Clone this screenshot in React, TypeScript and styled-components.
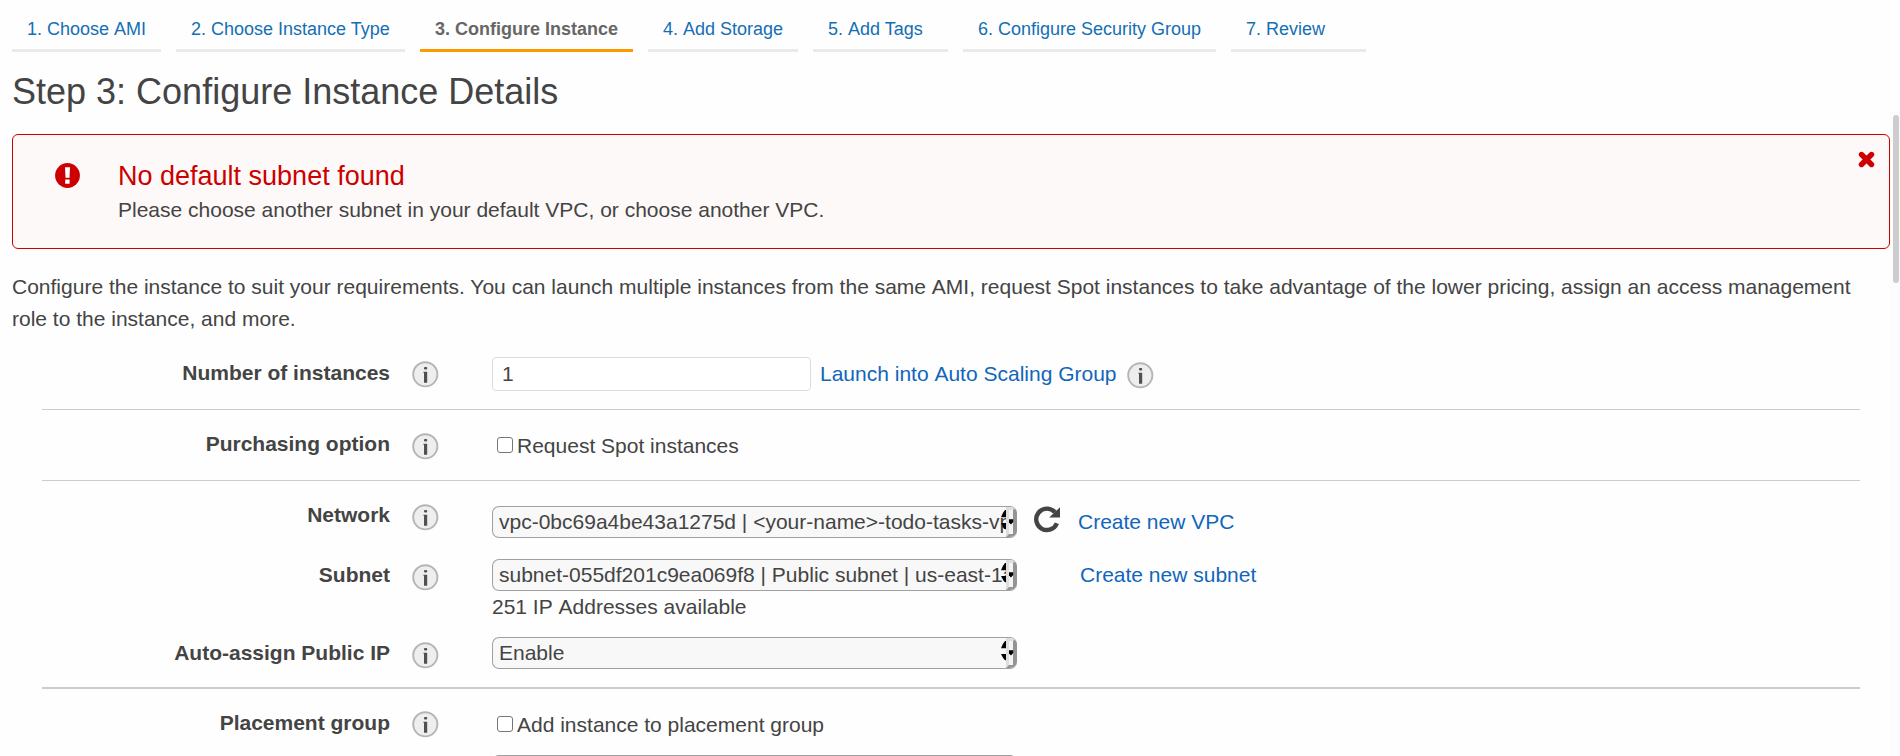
import React from "react";
import styled, { createGlobalStyle } from "styled-components";

const Global = createGlobalStyle`
  * { box-sizing: border-box; }
  html, body { margin: 0; height: 100%; overflow: hidden; background: #fefefe; }
  body {
    font-family: "Liberation Sans", Arial, sans-serif;
    font-size: 21px;
    color: #444;
  }
`;

const Page = styled.div`
  display: flex;
  flex-direction: column;
  height: 756px;
  overflow: hidden;
`;

const Tabs = styled.nav`
  display: flex;
  flex: none;
  gap: 15px;
  height: 52px;
  padding-left: 12px;
`;

const Tab = styled.a<{ $width: number; $active?: boolean }>`
  flex: none;
  width: ${(p) => p.$width}px;
  height: 52px;
  padding-left: 15px;
  font-size: 18px;
  line-height: 58px;
  white-space: nowrap;
  font-weight: ${(p) => (p.$active ? 700 : 400)};
  color: ${(p) => (p.$active ? "#666" : "#146eb4")};
  border-bottom: 3px solid ${(p) => (p.$active ? "#f90" : "#eaeaea")};
`;

const Title = styled.h1`
  flex: none;
  margin: 0;
  height: 60px;
  padding: 19px 0 0 12px;
  font-size: 36px;
  line-height: 41px;
  font-weight: 400;
`;

const Body = styled.div`
  display: flex;
  flex: 1;
  min-height: 0;
`;

const Content = styled.main`
  flex: 1;
  min-width: 0;
  overflow: hidden;
  padding: 22px 0 0 12px;
`;

const Track = styled.div`
  flex: none;
  width: 10px;
  padding: 3px 1px 0 3px;
  background: #fcfcfc;
`;

const Thumb = styled.div`
  height: 168px;
  border-radius: 3px;
  background: #cdcdcd;
`;

const Alert = styled.section`
  display: flex;
  height: 115px;
  border: 1px solid #c00;
  border-radius: 6px;
  background: #fdf9f8;
`;

const AlertIcon = styled.div`
  width: 105px;
  padding: 28px 0 0 42px;
`;

const AlertText = styled.div`
  flex: 1;
  padding-top: 25px;
`;

const AlertTitle = styled.div`
  height: 34px;
  font-size: 27px;
  line-height: 33px;
  color: #c00;
`;

const AlertMessage = styled.div`
  line-height: 32px;
`;

const Close = styled.div`
  padding: 16px 14px 0 0;
`;

const Intro = styled.p`
  margin: 22px 0 0;
  width: 1860px;
  line-height: 32px;
`;

const Group = styled.section<{ $height: number; $line?: number }>`
  width: 1818px;
  height: ${(p) => p.$height}px;
  margin-left: 30px;
  border-bottom: ${(p) => p.$line ?? 0}px solid #ccc;
`;

const Row = styled.div<{ $height?: number }>`
  display: flex;
  height: ${(p) => p.$height ?? 60}px;
`;

const Label = styled.div<{ $top: number }>`
  width: 348px;
  padding-top: ${(p) => p.$top}px;
  text-align: right;
  font-weight: 700;
  line-height: 24px;
`;

const InfoCell = styled.div<{ $top: number }>`
  width: 102px;
  padding: ${(p) => p.$top}px 0 0 22px;
`;

const Field = styled.div<{ $top: number }>`
  display: flex;
  flex-wrap: wrap;
  align-content: flex-start;
  align-items: flex-start;
  width: 900px;
  padding-top: ${(p) => p.$top}px;
`;

const NumberBox = styled.div`
  width: 319px;
  height: 34px;
  padding-left: 9px;
  border: 1px solid #ddd;
  border-radius: 4px;
  background: #fff;
  line-height: 32px;
`;

const Link = styled.a<{ $left: number; $line?: number }>`
  margin-left: ${(p) => p.$left}px;
  color: #1166bb;
  line-height: ${(p) => p.$line ?? 31}px;
`;

const LinkInfo = styled.div`
  padding: 5px 0 0 10px;
`;

const Check = styled.div`
  width: 16px;
  height: 16px;
  margin: 4px 4px 0 5px;
  border: 1px solid #767676;
  border-radius: 3px;
  background: #fff;
`;

const CheckText = styled.span`
  line-height: 26px;
`;

const SelectBox = styled.div`
  display: flex;
  position: relative;
  width: 525px;
  height: 32px;
  padding-left: 6px;
  border: 1px solid #a0a0a0;
  border-right: 0;
  border-radius: 7px;
  background: #f8f8f8;
  line-height: 29px;
  white-space: nowrap;
  overflow: hidden;
`;

const SelectText = styled.span`
  width: 508px;
  overflow: hidden;
`;

const Arrows = styled.svg`
  position: absolute;
  right: 0;
  top: -1px;
`;

const Hint = styled.div`
  width: 100%;
  line-height: 32px;
`;

const RefreshCell = styled.div`
  width: 43px;
  padding-left: 17px;
`;

const Space = styled.span`
  font-kerning: none;
`;

/* Keeps the full width of a space that stands before a capital A. */
const Words = ({ text }: { text: string }) => (
  <span>
    {text.split(/ (?=A)/).map((part, i) => (
      <React.Fragment key={i}>
        {i > 0 && <Space> </Space>}
        {part}
      </React.Fragment>
    ))}
  </span>
);

const Info = () => (
  <svg width="27" height="27" viewBox="0 0 27 27" display="block">
    <circle cx="13.3" cy="13.3" r="12.1" fill="#eee" stroke="#b5b5b5" strokeWidth="1.9" />
    <rect x="12" y="6" width="3.2" height="2.6" rx="1" fill="#505050" />
    <path d="M11.4 10.8h3.8v11h-3.2v-10h-.6z" fill="#505050" />
  </svg>
);

const Refresh = () => (
  <svg width="27" height="27" viewBox="0 0 27 27" display="block">
    <path d="M22.9 17.2A10.7 10.7 0 1 1 21 6.300" fill="none" stroke="#444" strokeWidth="4.4" />
    <path d="M26 1.300v10.100h-10.800z" fill="#444" />
  </svg>
);

const Select = ({ text = "" }: { text?: string }) => (
  <SelectBox>
    <SelectText>{text}</SelectText>
    <Arrows width="16" height="32" viewBox="0 0 16 32">
      <path d="M5 4v7.3H0Q2 6 4 4zM5 23.3V17H0Q2 21.500 4 23.300z" fill="#000" />
      <rect x="5" y="1" width="11" height="30" fill="#f4f4f4" />
      <path d="M5 1h10l-3 3H8v24l-3 3z" fill="#ddd" />
      <path d="M15 1l1 2v28H5l3-3h4V4z" fill="#949494" />
      <path d="M8 13.3h4.2v2.700l-2 2.300h-.6l-1.600-2z" fill="#000" />
    </Arrows>
  </SelectBox>
);

const tabs = [
  { text: "1. Choose AMI", width: 149 },
  { text: "2. Choose Instance Type", width: 229 },
  { text: "3. Configure Instance", width: 213, active: true },
  { text: "4. Add Storage", width: 150 },
  { text: "5. Add Tags", width: 135 },
  { text: "6. Configure Security Group", width: 253 },
  { text: "7. Review", width: 135 },
];

export default function App() {
  return (
    <Page>
      <Global />
      <Tabs>
        {tabs.map((t) => (
          <Tab key={t.text} $width={t.width} $active={t.active}><Words text={t.text} /></Tab>
        ))}
      </Tabs>
      <Title>Step 3: Configure Instance Details</Title>
      <Body>
        <Content>
          <Alert>
            <AlertIcon>
              <svg width="25" height="25" viewBox="0 0 25 25" display="block">
                <circle cx="12.5" cy="12.5" r="12.4" fill="#c00" />
                <path d="M10 4.2h5l-.5 10.5h-4zM10.2 16.5h4.4v4.3h-4.4z" fill="#fff" />
              </svg>
            </AlertIcon>
            <AlertText>
              <AlertTitle>No default subnet found</AlertTitle>
              <AlertMessage>
                Please choose another subnet in your default VPC, or choose another VPC.
              </AlertMessage>
            </AlertText>
            <Close>
              <svg width="17" height="17" viewBox="0 0 17 17" display="block">
                <path d="M3.5 3.5l10 10M13.5 3.5l-10 10" stroke="#c00" strokeWidth="5.4" strokeLinecap="round" />
              </svg>
            </Close>
          </Alert>
          <Intro>
            <Words text="Configure the instance to suit your requirements. You can launch multiple instances from the same AMI, request Spot instances to take advantage of the lower pricing, assign an access management role to the instance, and more." />
          </Intro>
          <Group $height={75} $line={1}>
            <Row>
              <Label $top={26}>Number of instances</Label>
              <InfoCell $top={26}><Info /></InfoCell>
              <Field $top={22}>
                <NumberBox>1</NumberBox>
                <Link $left={9} $line={33}><Words text="Launch into Auto Scaling Group" /></Link>
                <LinkInfo><Info /></LinkInfo>
              </Field>
            </Row>
          </Group>
          <Group $height={71} $line={1}>
            <Row>
              <Label $top={22}>Purchasing option</Label>
              <InfoCell $top={23}><Info /></InfoCell>
              <Field $top={23}>
                <Check />
                <CheckText>Request Spot instances</CheckText>
              </Field>
            </Row>
          </Group>
          <Group $height={208} $line={2}>
            <Row>
              <Label $top={22}>Network</Label>
              <InfoCell $top={23}><Info /></InfoCell>
              <Field $top={25}>
                <Select text="vpc-0bc69a4be43a1275d | <your-name>-todo-tasks-vpc" />
                <RefreshCell><Refresh /></RefreshCell>
                <Link $left={18}>Create new VPC</Link>
              </Field>
            </Row>
            <Row $height={78}>
              <Label $top={22}>Subnet</Label>
              <InfoCell $top={23}><Info /></InfoCell>
              <Field $top={18}>
                <Select text="subnet-055df201c9ea069f8 | Public subnet | us-east-1a" />
                <Link $left={63}>Create new subnet</Link>
                <Hint><Words text="251 IP Addresses available" /></Hint>
              </Field>
            </Row>
            <Row>
              <Label $top={22}>Auto-assign Public IP</Label>
              <InfoCell $top={23}><Info /></InfoCell>
              <Field $top={18}>
                <Select text="Enable" />
              </Field>
            </Row>
          </Group>
          <Group $height={120}>
            <Row $height={66}>
              <Label $top={22}>Placement group</Label>
              <InfoCell $top={22}><Info /></InfoCell>
              <Field $top={23}>
                <Check />
                <CheckText>Add instance to placement group</CheckText>
              </Field>
            </Row>
            <Row>
              <Label $top={0} />
              <InfoCell $top={0} />
              <Field $top={0}><Select /></Field>
            </Row>
          </Group>
        </Content>
        <Track><Thumb /></Track>
      </Body>
    </Page>
  );
}
